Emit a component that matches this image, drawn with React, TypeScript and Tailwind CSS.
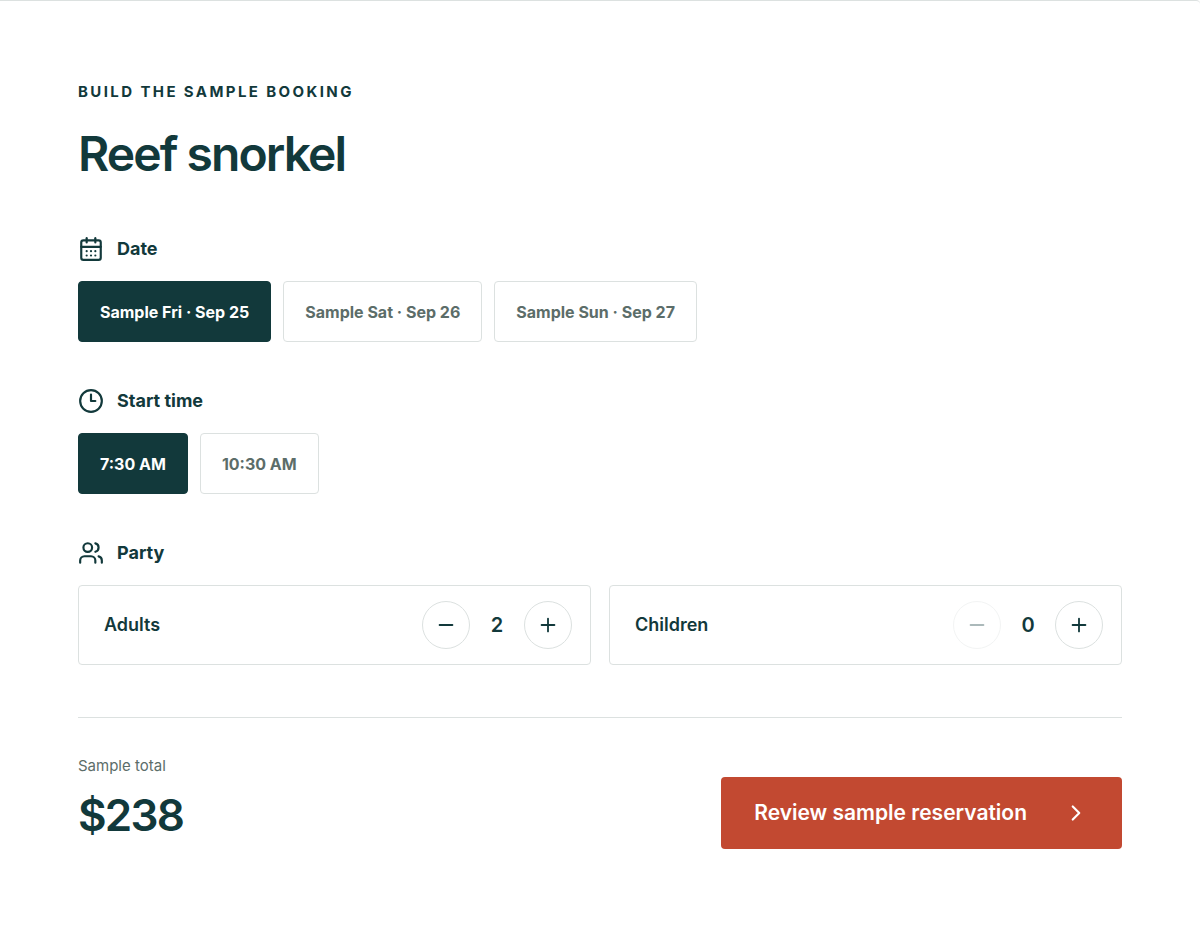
import { useState } from "react";
import type { ReactNode } from "react";
import { CalendarDays, ChevronRight, Clock3, Minus, Plus, Users } from "lucide-react";

const DATES = ["Sample Fri · Sep 25", "Sample Sat · Sep 26", "Sample Sun · Sep 27"];
const TIMES = ["7:30 AM", "10:30 AM"];
const ADULT_PRICE = 119;
const CHILD_PRICE = 89;

function Field({ icon, title, children }: { icon: ReactNode; title: string; children: ReactNode }) {
  return (
    <fieldset>
      <legend className="flex items-center gap-[13px] h-7 mb-[18px] text-lg leading-6 font-bold">
        {icon}
        {title}
      </legend>
      {children}
    </fieldset>
  );
}

function Options({ items, value, onChange }: { items: string[]; value: string; onChange: (v: string) => void }) {
  return (
    <div className="flex flex-wrap gap-3">
      {items.map((item) => (
        <button
          key={item}
          type="button"
          aria-pressed={item === value}
          onClick={() => onChange(item)}
          className={
            item === value
              ? "h-[61px] px-[21px] rounded-sm border border-[#12393b] bg-[#12393b] text-white text-base font-bold"
              : "h-[61px] px-[21px] rounded-sm border border-[#dce1e0] bg-white text-[#5c6d69] text-base font-bold"
          }
        >
          {item}
        </button>
      ))}
    </div>
  );
}

function Stepper({ label, value, onChange }: { label: string; value: number; onChange: (v: number) => void }) {
  const round =
    "size-12 rounded-full border border-[#dce1e0] flex items-center justify-center disabled:opacity-35";

  return (
    <div className="flex items-center justify-between border border-[#dce1e0] rounded-sm pl-[25px] pr-[18px] py-[15px]">
      <span className="text-lg font-semibold">{label}</span>
      <div className="flex items-center">
        <button
          type="button"
          aria-label={`Remove ${label}`}
          disabled={value === 0}
          onClick={() => onChange(value - 1)}
          className={round}
        >
          <Minus size={22} strokeWidth={2} />
        </button>
        <output className="w-[54px] text-center text-xl font-semibold">{value}</output>
        <button
          type="button"
          aria-label={`Add ${label}`}
          onClick={() => onChange(value + 1)}
          className={round}
        >
          <Plus size={22} strokeWidth={2} />
        </button>
      </div>
    </div>
  );
}

export default function App() {
  const [date, setDate] = useState(DATES[0]);
  const [time, setTime] = useState(TIMES[0]);
  const [adults, setAdults] = useState(2);
  const [children, setChildren] = useState(0);

  return (
    <main className="min-h-screen bg-white border-t border-[#dce1e0] rounded-tr-sm px-[78px] pt-[81px] pb-[75px] font-['Inter',sans-serif] text-[#12393b]">
      <p className="text-[15px] leading-5 font-bold uppercase tracking-[0.16em]">
        Build the sample booking
      </p>
      <h1 className="mt-6 text-5xl leading-[56px] font-semibold tracking-[-0.04em]">Reef snorkel</h1>

      <div className="mt-[53px] space-y-[45px]">
        <Field icon={<CalendarDays size={26} strokeWidth={2} />} title="Date">
          <Options items={DATES} value={date} onChange={setDate} />
        </Field>

        <Field icon={<Clock3 size={26} strokeWidth={2} />} title="Start time">
          <Options items={TIMES} value={time} onChange={setTime} />
        </Field>

        <Field icon={<Users size={26} strokeWidth={2} />} title="Party">
          <div className="grid grid-cols-2 gap-[18px] max-md:grid-cols-1">
            <Stepper label="Adults" value={adults} onChange={setAdults} />
            <Stepper label="Children" value={children} onChange={setChildren} />
          </div>
        </Field>
      </div>

      <div className="mt-[52px] pt-9 border-t border-[#dce1e0] flex flex-wrap items-end justify-between gap-6">
        <div>
          <p className="text-[15px] leading-6 text-[#5c6d69]">Sample total</p>
          <p className="mt-[3px] text-[44px] leading-[68px] font-semibold tracking-[-0.04em]">
            ${adults * ADULT_PRICE + children * CHILD_PRICE}
          </p>
        </div>
        <button
          type="button"
          className="h-[72px] px-[33px] rounded-sm bg-[#c24931] text-white text-[21px] font-semibold flex items-center gap-9"
        >
          Review sample reservation
          <ChevronRight size={26} strokeWidth={2} />
        </button>
      </div>
    </main>
  );
}
